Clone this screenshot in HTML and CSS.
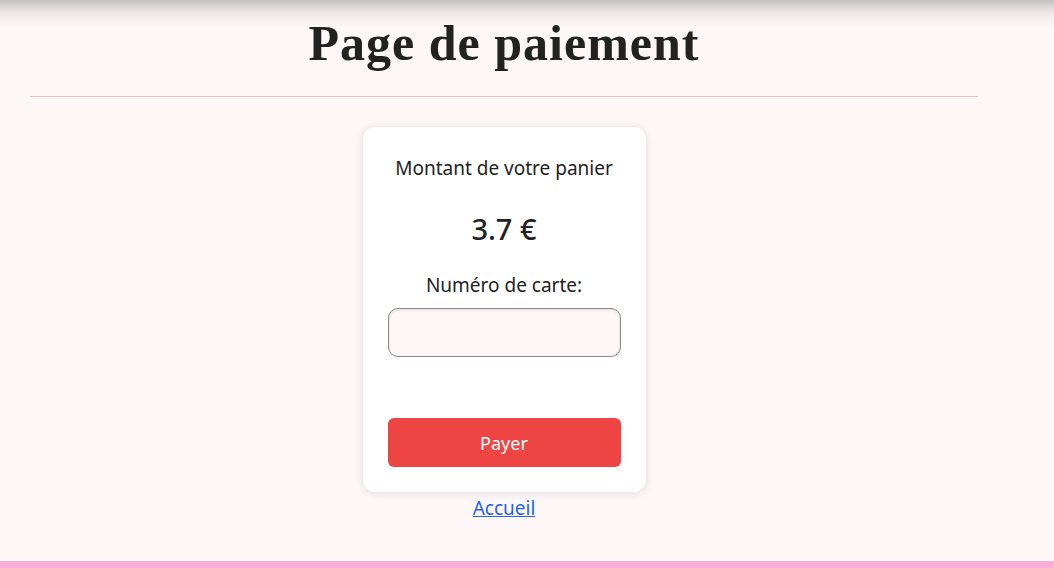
FILE: index.html
```html
<!DOCTYPE html>
<html lang="fr">
<head>
<meta charset="utf-8">
<title>Page de paiement</title>
<link rel="stylesheet" href="styles.css">
</head>
<body>
<div class="top-shadow"></div>
<main class="page">
  <h1 class="title">Page de paiement</h1>
  <div class="divider"></div>
  <div class="card">
    <p class="label">Montant de votre panier</p>
    <p class="amount">3.7 €</p>
    <label class="label card-label" for="card">Numéro de carte:</label>
    <input class="card-input" id="card" type="text">
    <button class="pay-btn" type="button">Payer</button>
  </div>
  <a class="home-link" href="#">Accueil</a>
</main>
<div class="bottom-bar"></div>
</body>
</html>
```

FILE: styles.css
```css
html, body {
  margin: 0;
  padding: 0;
  height: 100%;
}
body {
  background: #fdf8f7;
  font-family: "Noto Sans", "Open Sans", sans-serif;
  color: #212529;
  overflow: hidden;
}
.top-shadow {
  position: fixed;
  top: 0;
  left: 0;
  right: 0;
  height: 28px;
  background: linear-gradient(to bottom, rgba(0,0,0,0.22), rgba(0,0,0,0.06) 45%, rgba(0,0,0,0));
  pointer-events: none;
}
.page {
  width: 948px;
  margin-left: 30px;
  display: flex;
  flex-direction: column;
  align-items: center;
}
.title {
  font-family: "Liberation Serif", serif;
  font-weight: bold;
  font-size: 50px;
  letter-spacing: 1px;
  line-height: 60px;
  margin: 13px 0 0;
  color: #222;
}
.divider {
  align-self: stretch;
  height: 1px;
  background: #fbbaba;
  margin: 23px 0 30px;
}
.card {
  width: 233px;
  padding: 25px 25px 25px;
  background: #fff;
  border-radius: 12px;
  box-shadow: 0 1px 8px rgba(0,0,0,0.12);
  display: flex;
  flex-direction: column;
  align-items: center;
}
.label {
  font-size: 19px;
  line-height: 26px;
  margin: 3px 0 0;
  color: #222;
}
.amount {
  font-size: 29px;
  font-weight: 500;
  line-height: 36px;
  margin: 30px 0 0;
  color: #222;
}
.card-label {
  margin-top: 25px;
}
.card-input {
  box-sizing: border-box;
  width: 233px;
  height: 49px;
  margin-top: 10px;
  border: 1px solid #8a8a8a;
  border-radius: 10px;
  background: #fdf8f7;
  box-shadow: inset 0 1px 3px rgba(0,0,0,0.12);
}
.pay-btn {
  width: 233px;
  height: 49px;
  margin-top: 61px;
  border: 0;
  border-radius: 6px;
  background: #ef4444;
  color: #fff;
  font-family: "Noto Sans", "Open Sans", sans-serif;
  font-size: 18px;
}
.home-link {
  margin-top: 3px;
  font-size: 19px;
  color: #2563eb;
  text-decoration: underline;
}
.bottom-bar {
  position: fixed;
  left: 0;
  right: 0;
  bottom: 0;
  height: 7px;
  background: #fdaedb;
}
```
